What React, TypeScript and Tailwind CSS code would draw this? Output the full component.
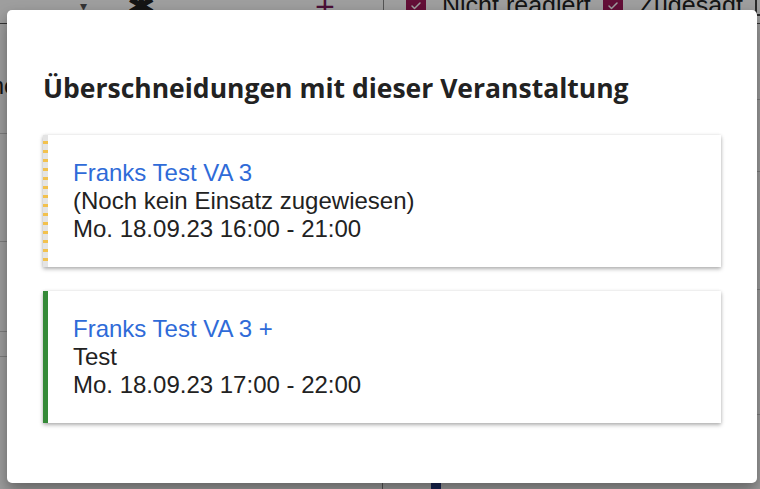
import { Check } from "lucide-react";

type Konflikt = {
  titel: string;
  einsatz: string;
  zeit: string;
  status: "offen" | "zugesagt";
};

const konflikte: Konflikt[] = [
  {
    titel: "Franks Test VA 3",
    einsatz: "(Noch kein Einsatz zugewiesen)",
    zeit: "Mo. 18.09.23 16:00 - 21:00",
    status: "offen",
  },
  {
    titel: "Franks Test VA 3 +",
    einsatz: "Test",
    zeit: "Mo. 18.09.23 17:00 - 22:00",
    status: "zugesagt",
  },
];

function KonfliktKarte({ k }: { k: Konflikt }) {
  return (
    <div className="flex bg-white shadow-[0_2px_4px_rgba(0,0,0,0.3),0_0_3px_rgba(0,0,0,0.08)]">
      {k.status === "offen" ? (
        <div className="w-[5px] shrink-0 bg-[repeating-linear-gradient(to_bottom,#e4e4e4_0px,#e4e4e4_6px,#f2c14e_6px,#f2c14e_9px)]" />
      ) : (
        <div className="w-[5px] shrink-0 bg-[#358a38]" />
      )}
      <div className="flex flex-col py-6 pl-[25px] pr-6 text-[24px] leading-[28px] text-[#222] font-['Liberation_Sans',Arial,sans-serif]">
        <span className="text-[#2f6bd8]">{k.titel}</span>
        <span>{k.einsatz}</span>
        <span>{k.zeit}</span>
      </div>
    </div>
  );
}

function Hintergrund() {
  return (
    <div className="h-[489px] w-[760px] overflow-hidden bg-white font-['Liberation_Sans',Arial,sans-serif] text-[#222]">
      <div className="-mt-[11px] flex h-[35px] items-center border-b border-[#555]">
        <div className="flex w-[383px] shrink-0 items-center pl-[80px]">
          <span className="text-[14px] text-[#555]">▾</span>
          <span className="ml-[40px] text-[34px] leading-none">✱</span>
          <span className="ml-[160px] text-[34px] leading-none text-[#7a1a5a]">+</span>
        </div>
        <div className="flex h-full shrink-0 items-center whitespace-nowrap border-l border-[#888] pl-[22px] text-[25px]">
          <span className="flex h-[20px] w-[20px] shrink-0 items-center justify-center rounded-[3px] bg-[#a0195a]">
            <Check className="h-3 w-3 text-white" strokeWidth={3} />
          </span>
          <span className="ml-4">Nicht reagiert</span>
          <span className="ml-3 flex h-[20px] w-[20px] shrink-0 items-center justify-center rounded-[3px] bg-[#a0195a]">
            <Check className="h-3 w-3 text-white" strokeWidth={3} />
          </span>
          <span className="ml-4">Zugesagt</span>
          <span className="ml-3 h-[20px] w-[20px] shrink-0 rounded-[2px] border-2 border-[#444]" />
        </div>
      </div>
      <div className="flex h-full">
        <div className="flex w-[383px] flex-col border-r border-[#888]">
          <div className="h-[110px] border-b border-[#ccc] pt-[44px] text-[24px]">
            <span className="-ml-[68px]">Termine</span>
          </div>
          <div className="h-[108px] border-b border-[#ccc]" />
          <div className="h-[90px] border-b border-[#ccc]" />
          <div className="h-[25px] border-b border-[#ccc]" />
        </div>
        <div className="flex flex-1 flex-col">
          <div className="h-[76px] border-b border-[#ccc]" />
          <div className="h-[72px] border-b border-[#ccc]" />
          <div className="h-[118px] border-b border-[#ccc]" />
          <div className="h-[125px] border-b border-[#ccc]" />
          <div className="mt-[66px] ml-[48px] h-[10px] w-[10px] bg-[#2b3f8a]" />
        </div>
      </div>
    </div>
  );
}

export default function App() {
  return (
    <div className="relative h-[489px] w-[760px] overflow-hidden">
      <Hintergrund />
      {/* Backdrop + Dialog */}
      <div className="absolute inset-0 bg-black/[0.38]">
        <div className="absolute left-[7px] top-[10px] h-[473px] w-[750px] rounded-[5px] bg-white px-9 pt-[60px] shadow-[0_10px_18px_rgba(0,0,0,0.25),0_4px_10px_rgba(0,0,0,0.15)]">
          <h2 className="whitespace-nowrap text-[26.5px] leading-[36px] font-bold text-[#222] font-['Open_Sans',sans-serif]">
            Überschneidungen mit dieser Veranstaltung
          </h2>
          <div className="mt-[29px] flex flex-col gap-6">
            {konflikte.map((k) => (
              <KonfliktKarte key={k.titel} k={k} />
            ))}
          </div>
        </div>
      </div>
    </div>
  );
}
